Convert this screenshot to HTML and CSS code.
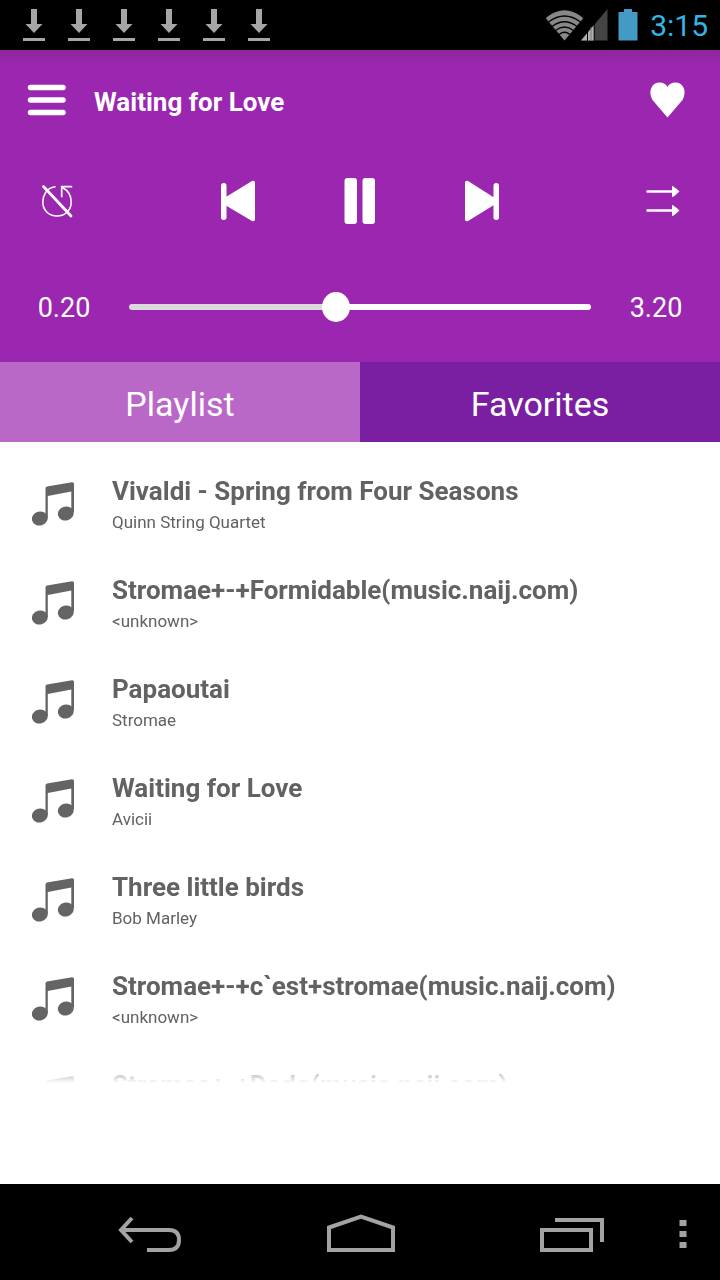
FILE: index.html
```html
<!DOCTYPE html>
<html lang="en">
<head>
<meta charset="utf-8">
<meta name="viewport" content="width=device-width, initial-scale=1">
<title>Music player</title>
<link rel="stylesheet" href="styles.css">
</head>
<body>
<svg width="0" height="0" class="defs" aria-hidden="true">
  <symbol id="download" viewBox="0 0 22 32"><path d="M8 0h6v15h5.500l-8.500 9L2.500 15H8zM0 29h22v3H0z" fill="#a6a6a6"/></symbol>
  <symbol id="note" viewBox="0 0 42 44"><path d="M13.500 6.500Q13.500 5 15 4.600L40 .2Q42 0 42 2v28H39.300V9.500L15.800 14v22h-2.300z"/><ellipse cx="7.800" cy="36.500" rx="8" ry="7" transform="rotate(-15 7.800 36.500)"/><ellipse cx="33.800" cy="31.500" rx="8" ry="7" transform="rotate(-15 33.800 31.500)"/></symbol>
</svg>
<div class="status">
  <div class="notices">
    <svg width="22" height="32"><use href="#download"/></svg>
    <svg width="22" height="32"><use href="#download"/></svg>
    <svg width="22" height="32"><use href="#download"/></svg>
    <svg width="22" height="32"><use href="#download"/></svg>
    <svg width="22" height="32"><use href="#download"/></svg>
    <svg width="22" height="32"><use href="#download"/></svg>
  </div>
  <svg width="62" height="32" viewBox="0 0 62 32">
    <path d="M18.500 31.500L0 9.500Q0 8.500 1 8Q18.500-5.500 36 8Q37 8.500 37 9.500z" fill="#888"/>
    <g fill="none" stroke="#000" stroke-width="1.300"><path d="M2.500 13Q18.500 1 34.500 13M6 17.500Q18.500 8 31 17.500M9.500 21.500Q18.500 14.500 27.500 21.500M13 25.500Q18.500 21 24 25.500"/></g>
    <path d="M61.500 0v31.500H35z" fill="#444"/><path d="M48 16v15.500H35z" fill="#b0b0b0"/>
    <path d="M41.500 22v10M48.200 14v18" stroke="#000" stroke-width="1"/><path d="M45 18v14" stroke="#777"/>
  </svg>
  <svg width="20" height="32" viewBox="0 0 20 32"><path d="M6 0h8v3h5.500v28.500H.5V3H6z" fill="#439ac2"/></svg>
  <span class="clock">3:15</span>
</div>
<header class="player">
  <div class="titlebar">
    <button aria-label="Menu"><svg width="40" height="40" viewBox="0 0 40 40"><path d="M3.500 7.500h32.500M3.500 20h32.500M3.500 32.500h32.500" stroke="#fff" stroke-width="5.500" stroke-linecap="round"/></svg></button>
    <h1>Waiting for Love</h1>
    <button aria-label="Favorite"><svg width="36" height="36" viewBox="0 0 36 36"><path d="M17.500 35.500L2.500 18C-2 10 1 1 9 .5C13 .3 16 2 17.500 5C19 2 22 .3 26 .5C34 1 37 10 32.500 18z" fill="#fff"/></svg></button>
  </div>
  <div class="controls">
    <button aria-label="Repeat off"><svg width="40" height="40" viewBox="0 0 40 40" fill="none" stroke="#fff" stroke-linecap="round"><path d="M18 5.800C9 7 5.800 15 5.800 21C5.800 29 11.500 35 20 35S34.200 29 34.200 21C34.200 15 31 9.500 25.500 6.500" stroke-width="1.600"/><path d="M24.700 15.500V5.700H34.500" stroke-width="1.700"/><path d="M6.500 5.500L34 35" stroke-width="2.800"/></svg></button>
    <div class="transport">
      <button aria-label="Previous"><svg width="36" height="42" viewBox="0 0 36 42" fill="#fff"><rect x="1" y="3" width="5.500" height="37" rx="2.700"/><path d="M5 17.500L32 1Q35 0 35 3v36q0 3-3 2L5 25z"/></svg></button>
      <button aria-label="Pause"><svg width="32" height="46" viewBox="0 0 32 46" fill="#fff"><rect x=".5" width="12.500" height="46" rx="3"/><rect x="18.500" width="12.500" height="46" rx="3"/></svg></button>
      <button aria-label="Next"><svg width="36" height="42" viewBox="0 0 36 42" fill="#fff"><rect x="29.500" y="3" width="5.500" height="37" rx="2.700"/><path d="M30 17.500L4 1Q1 0 1 3v36q0 3 3 2L30 25z"/></svg></button>
    </div>
    <button aria-label="Shuffle"><svg width="40" height="40" viewBox="0 0 40 40"><path d="M4.500 10.500h26M4.500 29.500h26" stroke="#fff" stroke-width="2.600" stroke-linecap="round"/><path d="M29 5q1-.5 7.500 5.500q-6.500 6-7.500 5.500zM29 24q1-.5 7.500 5.500q-6.500 6-7.500 5.500z" fill="#fff"/></svg></button>
  </div>
  <div class="seek">
    <span>0.20</span>
    <input type="range" min="0" max="1000" value="444" aria-label="Position">
    <span>3.20</span>
  </div>
</header>
<nav class="tabs">
  <button class="active">Playlist</button>
  <button>Favorites</button>
</nav>
<main class="list">
  <ul>
    <li><svg width="42" height="44"><use href="#note"/></svg><div><h2>Vivaldi - Spring from Four Seasons</h2><p>Quinn String Quartet</p></div></li>
    <li><svg width="42" height="44"><use href="#note"/></svg><div><h2>Stromae+-+Formidable(music.naij.com)</h2><p>&lt;unknown&gt;</p></div></li>
    <li><svg width="42" height="44"><use href="#note"/></svg><div><h2>Papaoutai</h2><p>Stromae</p></div></li>
    <li><svg width="42" height="44"><use href="#note"/></svg><div><h2>Waiting for Love</h2><p>Avicii</p></div></li>
    <li><svg width="42" height="44"><use href="#note"/></svg><div><h2>Three little birds</h2><p>Bob Marley</p></div></li>
    <li><svg width="42" height="44"><use href="#note"/></svg><div><h2>Stromae+-+c`est+stromae(music.naij.com)</h2><p>&lt;unknown&gt;</p></div></li>
    <li><svg width="42" height="44"><use href="#note"/></svg><div><h2>Stromae+-+Dodo(music.naij.com)</h2></div></li>
  </ul>
</main>
<footer class="system">
  <div class="keys">
    <button aria-label="Back"><svg width="64" height="40" viewBox="0 0 64 40"><path d="M14 2L3 14L14 26M3 14H51C58 14 61 18 61 24S58 34 51 34H29" /></svg></button>
    <button aria-label="Home"><svg width="68" height="40" viewBox="0 0 68 40"><path d="M2 34V11.500L34 0.500L66 11.500V34z"/></svg></button>
    <button aria-label="Recent apps"><svg width="64" height="40" viewBox="0 0 64 40"><path d="M2 14h49v20H2zM15 4H62V26"/></svg></button>
  </div>
  <button aria-label="More"><svg width="8" height="40" viewBox="0 0 8 40"><path d="M4 4v6M4 15v6M4 26v6" stroke-width="7"/></svg></button>
</footer>
</body>
</html>
```
FILE: styles.css
```css
* { box-sizing: border-box; }
body {
  margin: 0;
  height: 100vh;
  display: flex;
  flex-direction: column;
  font-family: Roboto, "Liberation Sans", sans-serif;
  background: #fff;
  color: #626262;
}
.defs { position: absolute; }
svg { display: block; flex: none; overflow: visible; }
button {
  display: flex;
  align-items: center;
  justify-content: center;
  padding: 0;
  border: 0;
  background: none;
  color: inherit;
  font: inherit;
}
h1, h2, p, ul { margin: 0; padding: 0; }

.status {
  display: flex;
  align-items: center;
  flex: none;
  height: 50px;
  padding: 0 12px 0 23px;
  background: #000;
}
.notices { display: flex; gap: 23px; flex: 1; }
.status > svg { margin-right: 10px; }
.clock {
  margin-left: 2px;
  padding-top: 2px;
  font-size: 30px;
  line-height: 48px;
  color: #33b5e5;
}

.player {
  flex: none;
  background: linear-gradient(#8e2699, #9b27b0 16px);
  color: #fff;
}
.titlebar {
  display: flex;
  align-items: center;
  height: 100px;
  padding: 0 34px 0 27px;
}
.titlebar h1 {
  flex: 1;
  margin-left: 27px;
  padding-top: 3px;
  font-size: 26px;
  font-weight: 700;
}
.controls {
  display: flex;
  align-items: center;
  justify-content: space-between;
  height: 102px;
  padding: 0 37px;
}
.transport { display: flex; gap: 72px; }
.transport button { width: 50px; }
.seek {
  display: flex;
  align-items: center;
  gap: 38px;
  height: 110px;
  padding: 0 37px;
  font-size: 27px;
}
.seek span { width: 54px; padding-top: 2px; text-align: center; }
.seek input {
  flex: 1;
  min-width: 0;
  height: 30px;
  margin: 0;
  appearance: none;
  background: none;
}
.seek input::-webkit-slider-runnable-track {
  height: 6px;
  border-radius: 3px;
  background: linear-gradient(90deg, #dadada 44%, #fff 44%);
}
.seek input::-webkit-slider-thumb {
  appearance: none;
  width: 28px;
  height: 30px;
  margin-top: -12px;
  border-radius: 50%;
  background: #fff;
}

.tabs { display: flex; flex: none; height: 80px; }
.tabs button {
  flex: 1;
  padding-top: 4px;
  font-size: 34px;
  background: #7b1fa2;
  color: #fff;
}
.tabs .active { background: #ba68c8; }

.list {
  flex: 1;
  min-height: 0;
  margin-bottom: 101px;
  padding-top: 13px;
  overflow: hidden;
  mask-image: linear-gradient(to top, transparent, #000 24px);
}
.list ul { list-style: none; }
.list li {
  display: flex;
  gap: 38px;
  height: 99px;
  padding: 18px 32px 0;
}
.list svg { margin-top: 9px; fill: #646464; }
.list h2 {
  font-size: 26px;
  line-height: 36px;
  font-weight: 700;
  white-space: nowrap;
}
.list p { font-size: 17px; line-height: 26px; }

.system {
  display: flex;
  align-items: center;
  flex: none;
  height: 96px;
  padding: 8px 33px 0 118px;
  background: #000;
}
.system svg { fill: none; stroke: #a3a3a3; stroke-width: 4; }
.keys {
  display: flex;
  justify-content: space-between;
  flex: 1;
  margin-right: 75px;
}
```
